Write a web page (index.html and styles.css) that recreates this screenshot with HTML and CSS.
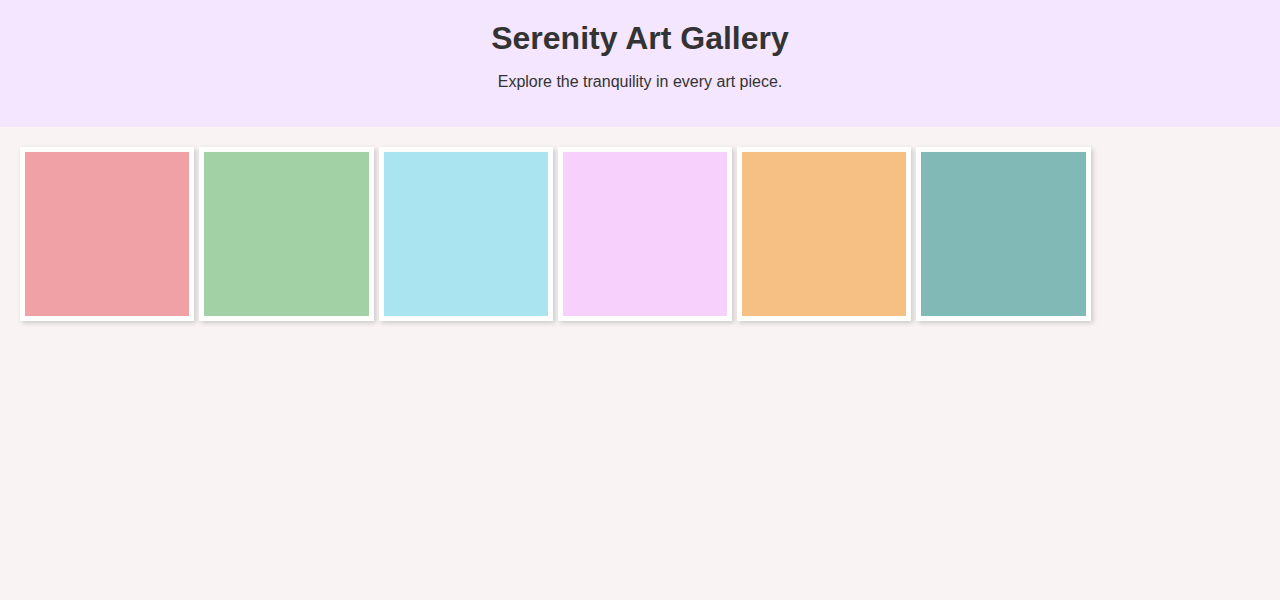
FILE: index.html
```html
<!DOCTYPE html>
<html lang="en">
<head>
<meta charset="utf-8">
<title>Serenity Art Gallery</title>
<link rel="stylesheet" href="styles.css">
</head>
<body>
<header class="site-header">
  <h1 class="title">Serenity Art Gallery</h1>
  <p class="subtitle">Explore the tranquility in every art piece.</p>
</header>
<main class="gallery">
  <div class="card"><div class="art art-rose"></div></div>
  <div class="card"><div class="art art-sage"></div></div>
  <div class="card"><div class="art art-sky"></div></div>
  <div class="card"><div class="art art-lilac"></div></div>
  <div class="card"><div class="art art-peach"></div></div>
  <div class="card"><div class="art art-teal"></div></div>
</main>
</body>
</html>
```
FILE: styles.css
```css
html, body {
  margin: 0;
  padding: 0;
}
body {
  background: #f9f3f3;
  font-family: "Liberation Sans", Arial, sans-serif;
  color: #333333;
  min-height: 600px;
}
.site-header {
  background: #f3e6fe;
  text-align: center;
  padding: 20px 20px 20px;
}
.title {
  margin: 0 0 16px;
  font-size: 32px;
  font-weight: bold;
  color: #333333;
}
.subtitle {
  margin: 0 0 16px;
  font-size: 16px;
  color: #333333;
}
.gallery {
  display: flex;
  flex-wrap: wrap;
  gap: 5px;
  padding: 20px;
}
.card {
  box-sizing: border-box;
  width: 174.25px;
  background: #ffffff;
  padding: 5px;
  box-shadow: 2px 2px 5px rgba(0, 0, 0, 0.18);
}
.art {
  width: 100%;
  height: 164px;
}
.art-rose { background: #f0a1a6; }
.art-sage { background: #a3d1a6; }
.art-sky { background: #aae4f0; }
.art-lilac { background: #f7d0fb; }
.art-peach { background: #f6c085; }
.art-teal { background: #81b9b7; }
```
